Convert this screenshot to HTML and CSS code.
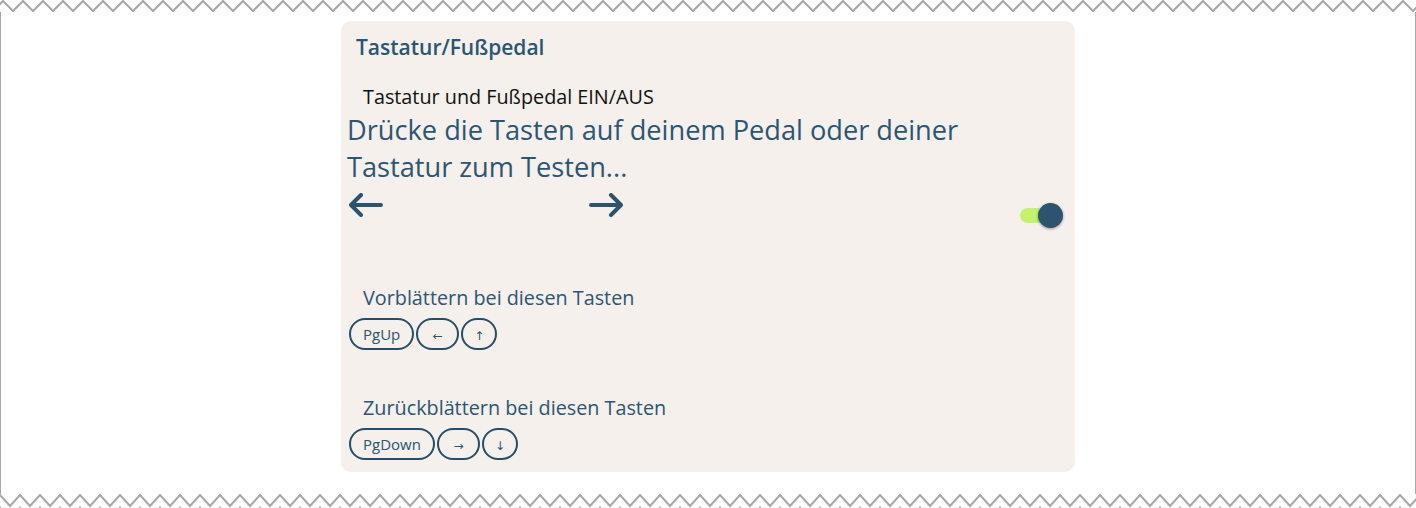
FILE: index.html
```html
<!DOCTYPE html>
<html lang="de">
<head>
<meta charset="utf-8">
<title>Tastatur/Fußpedal</title>
<link rel="stylesheet" href="styles.css">
</head>
<body>
<svg class="zig zig-top" width="1416" height="12" aria-hidden="true">
  <defs>
    <pattern id="zt" patternUnits="userSpaceOnUse" x="3" y="0" width="20" height="12">
      <path d="M-10 11 L0 1 L10 11 L20 1 L30 11" fill="none" stroke="#a6a6a6" stroke-width="2"/>
    </pattern>
  </defs>
  <rect width="1416" height="12" fill="url(#zt)"/>
</svg>
<main class="frame">
  <section class="card">
    <h2 class="title">Tastatur/Fußpedal</h2>
    <div class="toggle-label">Tastatur und Fußpedal EIN/AUS</div>
    <p class="prompt">Drücke die Tasten auf deinem Pedal oder deiner Tastatur zum Testen...</p>
    <div class="controls">
      <div class="arrows">
        <svg class="arrow" width="34" height="24" viewBox="0 0 34 24" aria-label="zurück">
          <path d="M2 12 H32 M12 2 L2 12 L12 22" fill="none" stroke="#2b5470" stroke-width="4" stroke-linecap="round" stroke-linejoin="round"/>
        </svg>
        <svg class="arrow" width="34" height="24" viewBox="0 0 34 24" aria-label="vor">
          <path d="M2 12 H32 M22 2 L32 12 L22 22" fill="none" stroke="#2b5470" stroke-width="4" stroke-linecap="round" stroke-linejoin="round"/>
        </svg>
      </div>
      <div class="switch" role="switch" aria-checked="true">
        <span class="track"></span>
        <span class="knob"></span>
      </div>
    </div>
    <div class="group group-first">
      <div class="label">Vorblättern bei diesen Tasten</div>
      <div class="keys">
        <span class="key">PgUp</span>
        <span class="key key-h">←</span>
        <span class="key key-v">↑</span>
      </div>
    </div>
    <div class="group">
      <div class="label">Zurückblättern bei diesen Tasten</div>
      <div class="keys">
        <span class="key">PgDown</span>
        <span class="key key-h">→</span>
        <span class="key key-v">↓</span>
      </div>
    </div>
  </section>
</main>
<svg class="zig zig-bottom" width="1416" height="14" aria-hidden="true">
  <defs>
    <pattern id="zb" patternUnits="userSpaceOnUse" x="0" y="0" width="20" height="14">
      <path d="M-10 12 L0 1 L10 12 L20 1 L30 12" fill="none" stroke="#a6a6a6" stroke-width="2"/>
      <rect x="-1" y="12.5" width="2" height="2" fill="#b4b4b4"/>
      <rect x="19" y="12.5" width="2" height="2" fill="#b4b4b4"/>
    </pattern>
  </defs>
  <rect width="1416" height="14" fill="url(#zb)"/>
</svg>
</body>
</html>
```

FILE: styles.css
```css
html, body {
  margin: 0;
  padding: 0;
  background: #ffffff;
}

body {
  height: 508px;
  overflow: hidden;
  display: flex;
  flex-direction: column;
  font-family: "Open Sans", "Noto Sans", "DejaVu Sans", sans-serif;
  color: #2b5470;
}

.zig {
  display: block;
  flex: none;
}

.frame {
  flex: 1;
  border-left: 1px solid #a6a6a6;
  border-right: 1px solid #a6a6a6;
  display: flex;
  flex-direction: column;
  align-items: center;
}

.card {
  box-sizing: border-box;
  width: 734px;
  margin-top: 9px;
  padding: 11px 12px 12px 8px;
  background: #f5f0eb;
  border-radius: 10px;
}

.title {
  margin: 0 0 0 7px;
  font-size: 21px;
  line-height: 30px;
  font-weight: 600;
  color: #2b5673;
}

.toggle-label {
  margin: 23px 0 0 14px;
  font-size: 19.8px;
  line-height: 24px;
  color: #111111;
}

.prompt {
  margin: 2px 0 0 -2px;
  width: 680px;
  font-size: 27.2px;
  line-height: 37px;
  color: #2b5673;
}

.controls {
  display: flex;
  align-items: flex-start;
  margin-top: 8px;
  height: 35px;
}

.arrows {
  display: grid;
  grid-template-columns: 240px 240px;
}

.arrow {
  display: block;
}

.switch {
  position: relative;
  margin-left: auto;
  margin-top: 10px;
  width: 43px;
  height: 25px;
}

.track {
  position: absolute;
  left: 0;
  top: 5px;
  width: 38px;
  height: 15px;
  border-radius: 8px;
  background: #c3f36b;
}

.knob {
  position: absolute;
  right: 0;
  top: 0;
  width: 25px;
  height: 25px;
  border-radius: 50%;
  background: #2b5470;
  box-shadow: 0 1px 3px rgba(0, 0, 0, 0.4);
}

.group {
  margin-top: 45px;
}

.group-first {
  margin-top: 57px;
}

.label {
  margin-left: 14px;
  font-size: 19.8px;
  line-height: 26px;
  color: #2b5673;
}

.keys {
  display: flex;
  gap: 2px;
  margin-top: 7px;
}

.key {
  box-sizing: border-box;
  height: 32px;
  padding: 0 12px;
  border: 2px solid #264e69;
  border-radius: 16px;
  font-size: 15px;
  line-height: 28px;
  color: #2b5470;
  text-align: center;
}

.key-h,
.key-v {
  padding: 4px 0 0 0;
  line-height: 24px;
  font-size: 12px;
  font-family: "DejaVu Sans", sans-serif;
}

.key-h {
  width: 43px;
}

.key-v {
  width: 36px;
}
```
